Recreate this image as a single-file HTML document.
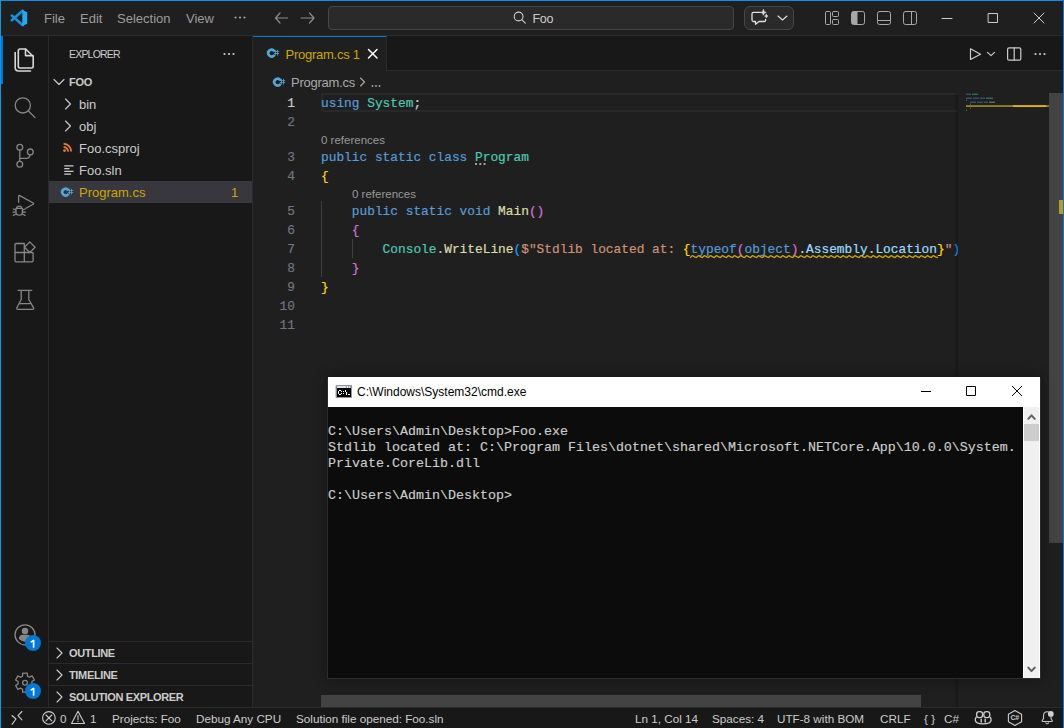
<!DOCTYPE html>
<html><head><meta charset="utf-8">
<style>
*{margin:0;padding:0;box-sizing:border-box}
html,body{width:1064px;height:728px;overflow:hidden;background:#1f1f1f}
body{position:relative;font-family:"Liberation Sans",sans-serif;font-size:13px;color:#cccccc}
.a{position:absolute}
svg.i{position:absolute;overflow:visible;fill:none;stroke-linecap:round;stroke-linejoin:round}
#bt{left:0;top:0;width:1064px;height:1px;background:#0a90e4}
#bl{left:0;top:0;width:1px;height:728px;background:#0a98e6}
#br{left:1063px;top:0;width:1px;height:728px;background:#0878d6}
#title{left:1px;top:1px;width:1062px;height:35px;background:#1f1f1f;border-bottom:1px solid #2b2b2b}
.menu{top:10.6px;color:#9d9d9d;font-size:13px;line-height:16px}
#cc{left:328px;top:6px;width:406px;height:24px;border:1px solid #474747;background:#2a2a2a;border-radius:4px}
#chat{left:744px;top:6px;width:50px;height:24px;border:1px solid #474747;background:#2a2a2a;border-radius:6px}
#act{left:1px;top:36px;width:48px;height:671px;background:#181818;border-right:1px solid #2b2b2b}
#actb{left:1px;top:36px;width:2px;height:48px;background:#0078d4}
#side{left:49px;top:36px;width:204px;height:671px;background:#181818;border-right:1px solid #2b2b2b}
.row{left:49px;width:203px;height:22px;line-height:24px;font-size:13px;color:#cccccc}
.sec{left:49px;width:203px;height:22px;line-height:22px;font-size:11px;font-weight:bold;color:#cccccc;border-top:1px solid #2b2b2b;letter-spacing:-0.35px}
#tabs{left:253px;top:36px;width:810px;height:35px;background:#181818;border-bottom:1px solid #2b2b2b}
#tab{left:253px;top:36px;width:134px;height:35px;background:#1f1f1f;border-top:1px solid #0078d4;border-right:1px solid #2b2b2b}
.code{font-family:"Liberation Mono",monospace;font-size:12.83px;line-height:19px;height:19px;white-space:pre;-webkit-text-stroke:0.2px}
.ln{left:255px;width:40px;text-align:right;color:#6e7681}
.cl{font-size:11.5px;color:#999999;line-height:16px;height:16px}
.kw{color:#569cd6}.ty{color:#4ec9b0}.fn{color:#dcdcaa}.st{color:#ce9178}.b1{color:#ffd700}.b2{color:#da70d6}.b3{color:#179fff}.pr{color:#9cdcfe}
#status{left:1px;top:707px;width:1062px;height:21px;background:#181818;border-top:1px solid #2b2b2b}
.sb{top:711px;font-size:11.7px;line-height:16px;color:#cccccc}
#cmd{left:328px;top:377px;width:712px;height:301px;background:#0c0c0c;box-shadow:0 1px 0 0 #2c2c2c,-1px 1px 0 0 #2c2c2c,1px 1px 0 0 #2c2c2c,0 0 12px 2px rgba(0,0,0,0.3)}
#cmdt{left:328px;top:377px;width:712px;height:30px;background:#ffffff}
.ct{font-family:"Liberation Mono",monospace;font-size:13.33px;line-height:16px;color:#cccccc;white-space:pre;-webkit-text-stroke:0.15px #cccccc}
.badge{width:16px;height:16px;border-radius:8px;background:#0078d4;color:#fff;font-size:10px;font-weight:bold;line-height:16px;text-align:center}
</style></head><body>
<div class="a" id="title"></div>
<div class="a" id="bt"></div><div class="a" id="bl"></div><div class="a" id="br"></div>

<!-- vscode logo -->
<svg class="i" style="left:0;top:0" width="40" height="36" stroke-linecap="butt">
  <path d="M11.8 15.6 L22.6 25" stroke="#1b8fdd" stroke-width="2.7"/>
  <path d="M11.8 20.2 L22.6 10.8" stroke="#1b8fdd" stroke-width="2.7"/>
  <path d="M22.3 10 L27.2 12.3 L27.2 23.7 L22.3 25.9 Z" fill="#25a9f3" stroke="none"/>
</svg>
<div class="a menu" style="left:44px">File</div>
<div class="a menu" style="left:80px">Edit</div>
<div class="a menu" style="left:117px">Selection</div>
<div class="a menu" style="left:186px">View</div>
<svg class="i" style="left:0;top:0" width="260" height="36"><g fill="#9d9d9d" stroke="none"><circle cx="235.5" cy="17.5" r="1.1"/><circle cx="240" cy="17.5" r="1.1"/><circle cx="244.5" cy="17.5" r="1.1"/></g></svg>
<!-- nav arrows -->
<svg class="i" style="left:0;top:0" width="320" height="36" stroke="#8b8b8b" stroke-width="1.2">
  <path d="M280 13 L275.5 18 L280 23 M275.5 18 L287.5 18"/>
  <path d="M309.5 13 L314 18 L309.5 23 M314 18 L301 18"/>
</svg>
<div class="a" id="cc"></div>
<svg class="i" style="left:0;top:0" width="540" height="36" stroke="#cccccc" stroke-width="1.1">
  <circle cx="518.6" cy="16.5" r="4.4"/><path d="M521.8 19.7 L525.3 23.2"/>
</svg>
<div class="a" style="left:532.5px;top:10.8px;font-size:12.5px;line-height:16px;color:#cccccc;letter-spacing:-0.3px">Foo</div>
<div class="a" id="chat"></div>
<svg class="i" style="left:0;top:0" width="800" height="36" stroke="#e0e0e0" stroke-width="1.3">
  <path d="M760.3 12.4 L753.5 12.4 Q752 12.4 752 13.9 L752 20 Q752 21.5 753.5 21.5 L755.5 21.5 L755.5 24.3 L759 21.5 L764.3 21.5 Q765.6 21.5 765.6 20.2 L765.6 19.3"/>
  <path d="M763.4 9.6 Q763.6 12.2 766.2 12.4 Q763.6 12.6 763.4 15.2 Q763.2 12.6 760.6 12.4 Q763.2 12.2 763.4 9.6 Z" fill="#e0e0e0" stroke-width="0.6"/>
  <path d="M766.3 14.3 Q766.4 16 768.1 16.1 Q766.4 16.2 766.3 17.9 Q766.2 16.2 764.5 16.1 Q766.2 16 766.3 14.3 Z" fill="#e0e0e0" stroke-width="0.6"/>
  <path d="M778 16 L782.5 20 L787 16" stroke-width="1.1"/>
</svg>
<!-- layout icons -->
<svg class="i" style="left:0;top:0" width="930" height="36" stroke="#a8a8a8" stroke-width="1">
  <rect x="825.5" y="11.5" width="5" height="13" rx="1"/>
  <rect x="832.5" y="11.5" width="6" height="5" rx="1"/>
  <rect x="832.5" y="19.5" width="6" height="5" rx="1"/>
  <rect x="851.5" y="11.5" width="13" height="13" rx="2"/>
  <path d="M852 12 L857.5 12 L857.5 24 L852 24 Z" fill="#a8a8a8" stroke="none"/>
  <rect x="877.5" y="11.5" width="13" height="13" rx="2"/>
  <path d="M878 20.5 L890 20.5"/>
  <rect x="903.5" y="11.5" width="13" height="13" rx="2"/>
  <path d="M911.5 12 L911.5 24"/>
</svg>
<!-- window controls -->
<svg class="i" style="left:0;top:0" width="1064" height="36" stroke="#cccccc" stroke-width="1">
  <path d="M942 18.5 L952 18.5"/>
  <rect x="988.5" y="13.5" width="9" height="9"/>
  <path d="M1034 13 L1044 23 M1044 13 L1034 23"/>
</svg>

<div class="a" id="act"></div>
<div class="a" id="actb"></div>
<!-- activity icons -->
<svg class="i" style="left:0;top:0" width="48" height="320">
  <g stroke="#d7d7d7" stroke-width="1.6">
    <path d="M25.5 49 L20 49 Q18.3 49 18.3 50.7 L18.3 66.3 Q18.3 68 20 68 L31.5 68 Q33.2 68 33.2 66.3 L33.2 56.5 L25.7 49 Z"/>
    <path d="M25.5 49.2 L25.5 55.6 L33 55.6"/>
    <path d="M15.2 52.5 L15.2 67.5 Q15.2 71 18.7 71 L30.5 71"/>
  </g>
  <g stroke="#868686" stroke-width="1.3">
    <circle cx="22.8" cy="105.4" r="7.6"/><path d="M28.4 111 L35 117.6"/>
    <circle cx="19.8" cy="147.3" r="2.9"/><circle cx="19.8" cy="164.2" r="2.9"/><circle cx="30.3" cy="151.9" r="2.9"/>
    <path d="M19.8 150.2 L19.8 161.3 M19.8 158.3 L26.5 158.3 Q29.5 158.3 30 154.8"/>
    <path d="M18.6 202.3 L18.6 196.3 Q18.6 195 19.8 195.6 L33.2 203 Q34 203.7 33.2 204.3 L26 208.3"/>
    <path d="M16.8 207.3 Q19.2 204.8 21.6 207.3 M16 208.3 L16 212 Q16 215.2 19.2 215.2 Q22.4 215.2 22.4 212 L22.4 208.3 Z M13.3 209 L16 210.2 M25.1 209 L22.4 210.2 M13 212.2 L16 212.2 M25.4 212.2 L22.4 212.2 M13.3 215.3 L16.2 214 M25.1 215.3 L22.2 214"/>
    <path d="M24.3 243.5 L16 243.5 Q15 243.5 15 244.5 L15 260.8 Q15 261.8 16 261.8 L32.1 261.8 Q33.1 261.8 33.1 260.8 L33.1 253.5 Q33.1 252.5 32.1 252.5 L24.3 252.5 Z M15 252.5 L24.3 252.5 M24.3 252.5 L24.3 261.8"/>
    <path d="M29.8 241.9 L35.1 247.2 L29.8 252.5 L24.5 247.2 Z"/>
    <path d="M18.1 290.3 L31.8 290.3 M21.2 290.3 L21.2 299.5 L16.9 307.8 Q16.3 309.4 18 309.4 L32.5 309.4 Q34.2 309.4 33.6 307.8 L28.8 299.5 L28.8 290.3 M20 303.6 L30 303.6"/>
  </g>
</svg>
<svg class="i" style="left:0;top:600px" width="48" height="107">
  <g stroke="#868686" stroke-width="1.3">
    <circle cx="25" cy="34.8" r="10"/>
    <circle cx="25" cy="30.9" r="2.6" fill="#868686"/>
    <path d="M19.5 38.5 Q20 35.3 22.5 35.3 L27.5 35.3 Q30 35.3 30.5 38.5 Q28 41 25 41 Q22 41 19.5 38.5 Z" fill="#868686"/>
    <path d="M22.53 76.15 L22.67 73.18 L27.33 73.18 L27.47 76.15 L29.44 77.29 L32.08 75.92 L34.41 79.96 L31.91 81.56 L31.91 83.84 L34.41 85.44 L32.08 89.48 L29.44 88.11 L27.47 89.25 L27.33 92.22 L22.67 92.22 L22.53 89.25 L20.56 88.11 L17.92 89.48 L15.59 85.44 L18.09 83.84 L18.09 81.56 L15.59 79.96 L17.92 75.92 L20.56 77.29 Z"/>
    <circle cx="25" cy="82.7" r="2.4"/>
  </g>
</svg>
<div class="a badge" style="left:25px;top:635px"></div>
<div class="a badge" style="left:25px;top:683px"></div>

<svg class="i" style="left:0;top:0" width="48" height="707" stroke="#ffffff" stroke-width="1.7" stroke-linecap="butt" stroke-linejoin="miter">
  <path d="M31.2 641.9 L33.6 640.4 L33.6 647"/>
  <path d="M31.2 689.9 L33.6 688.4 L33.6 695"/>
</svg>
<div class="a" id="side"></div>
<!-- sidebar content -->
<div class="a" style="left:69px;top:46px;font-size:10.5px;line-height:16px;color:#cccccc;letter-spacing:-0.8px">EXPLORER</div>
<svg class="i" style="left:0;top:0" width="252" height="60"><g fill="#cccccc" stroke="none"><circle cx="224.5" cy="54" r="1.1"/><circle cx="229" cy="54" r="1.1"/><circle cx="233.5" cy="54" r="1.1"/></g></svg>
<div class="a" style="left:69px;top:73px;font-size:11px;line-height:18px;font-weight:bold;color:#cccccc;letter-spacing:-0.3px">FOO</div>
<div class="a row" style="top:93px"><span class="a" style="left:30px">bin</span></div>
<div class="a row" style="top:115px"><span class="a" style="left:30px">obj</span></div>
<div class="a row" style="top:137px"><span class="a" style="left:30px">Foo.csproj</span></div>
<div class="a row" style="top:159px"><span class="a" style="left:30px">Foo.sln</span></div>
<div class="a row" style="top:181px;background:#37373d;color:#cca700"><span class="a" style="left:30px">Program.cs</span><span class="a" style="left:182px">1</span></div>
<div class="a sec" style="top:641px"><span class="a" style="left:20px">OUTLINE</span></div>
<div class="a sec" style="top:663px"><span class="a" style="left:20px">TIMELINE</span></div>
<div class="a sec" style="top:685px"><span class="a" style="left:20px">SOLUTION EXPLORER</span></div>
<svg class="i" style="left:0;top:0" width="252" height="707" stroke="#cccccc" stroke-width="1.1">
  <path d="M54 79.5 L59 84.5 L64 79.5"/>
  <path d="M65.5 99 L70.5 104 L65.5 109"/>
  <path d="M65.5 121 L70.5 126 L65.5 131"/>
  <path d="M57 648 L62 653 L57 658"/>
  <path d="M57 670 L62 675 L57 680"/>
  <path d="M57 692 L62 697 L57 702"/>
  <g stroke-linecap="butt" stroke-width="1.2">
  <path d="M64.3 165.8 L73.5 165.8 M64.3 168.6 L69.5 168.6 M64.3 171.4 L73.5 171.4 M64.3 174.2 L71 174.2"/>
  </g>
  <g stroke="#e37933" stroke-width="1.9" stroke-linecap="butt">
    <circle cx="64.5" cy="150.6" r="1.4" fill="#e37933" stroke="none"/>
    <path d="M63.6 147 A4.4 4.4 0 0 1 68 151.6"/>
    <path d="M63.6 143.8 A7.7 7.7 0 0 1 71.2 151.6"/>
  </g>
</svg>


<!-- editor tabs -->
<div class="a" id="tabs"></div>
<div class="a" id="tab"></div>
<div class="a" style="left:285.5px;top:46px;font-size:13px;line-height:18px;color:#cca700;letter-spacing:-0.25px">Program.cs 1</div>
<svg class="i" style="left:0;top:0" width="400" height="70" stroke="#ffffff" stroke-width="1.5">
  <path d="M368.5 49.5 L377 58 M377 49.5 L368.5 58"/>
</svg>
<div class="a" style="left:291px;top:75px;font-size:13px;line-height:16px;color:#a9a9a9;letter-spacing:-0.25px">Program.cs</div>
<svg class="i" style="left:0;top:0" width="400" height="92" stroke="#a9a9a9" stroke-width="1.1">
  <path d="M360.5 78 L364.5 82 L360.5 86"/>
  <g fill="#a9a9a9" stroke="none"><circle cx="372.5" cy="86" r="0.9"/><circle cx="376" cy="86" r="0.9"/><circle cx="379.5" cy="86" r="0.9"/></g>
</svg>
<!-- editor actions -->
<svg class="i" style="left:0;top:0" width="1064" height="70" stroke="#cccccc" stroke-width="1.2">
  <path d="M970.5 48.8 L970.5 59.5 L980.5 54.2 Z"/>
  <path d="M987.5 52.3 L991 55.7 L994.5 52.3" stroke-width="1.1"/>
  <rect x="1007.6" y="47.8" width="13.2" height="12.4" rx="1.5"/>
  <path d="M1014.2 48 L1014.2 60"/>
  <g fill="#cccccc" stroke="none"><circle cx="1035.5" cy="54" r="1.1"/><circle cx="1040" cy="54" r="1.1"/><circle cx="1044.5" cy="54" r="1.1"/></g>
</svg>

<!-- C# icons -->
<svg class="i" style="left:0;top:0" width="300" height="200" stroke-linecap="butt" stroke-linejoin="miter">
  <defs><g id="csi">
    <path d="M5.79 2.5 A3.4 3.4 0 1 0 5.79 7.7" stroke="#55a8d6" stroke-width="2.6"/>
    <path d="M7.5 2.2 L7.5 7.2 M9.5 2.2 L9.5 7.2 M6.3 3.5 L10.8 3.5 M6.3 5.5 L10.8 5.5" stroke="#55a8d6" stroke-width="0.9" opacity="0.85"/>
  </g></defs>
  <use href="#csi" x="268" y="48"/>
  <use href="#csi" x="274" y="77"/>
  <use href="#csi" x="62" y="187"/>
</svg>
<!-- line highlight -->
<div class="a" style="left:321px;top:93px;width:637px;height:19px;border:2px solid #282828;border-right:none"></div>
<!-- indent guides -->
<div class="a" style="left:321px;top:201px;width:1px;height:76px;background:#404040"></div>
<div class="a" style="left:352px;top:239px;width:1px;height:19px;background:#404040"></div>

<!-- line numbers -->
<div class="a code ln" style="top:94px;color:#cccccc">1</div>
<div class="a code ln" style="top:113px">2</div>
<div class="a code ln" style="top:148px">3</div>
<div class="a code ln" style="top:167px">4</div>
<div class="a code ln" style="top:202px">5</div>
<div class="a code ln" style="top:221px">6</div>
<div class="a code ln" style="top:240px">7</div>
<div class="a code ln" style="top:259px">8</div>
<div class="a code ln" style="top:278px">9</div>
<div class="a code ln" style="top:297px">10</div>
<div class="a code ln" style="top:316px">11</div>

<!-- code -->
<div class="a code" style="left:321px;top:94px"><span class="kw">using</span> <span class="ty">System</span>;</div>
<div class="a cl" style="left:321px;top:132px">0 references</div>
<div class="a code" style="left:321px;top:148px"><span class="kw">public</span> <span class="kw">static</span> <span class="kw">class</span> <span class="ty">Program</span></div>
<svg class="i" style="left:0;top:0" width="500" height="170"><g fill="#a0a0a0"><rect x="475" y="163" width="2" height="2"/><rect x="479.3" y="163" width="2" height="2"/><rect x="483.5" y="163" width="2" height="2"/></g></svg>
<div class="a code" style="left:321px;top:167px"><span class="b1">{</span></div>
<div class="a cl" style="left:352px;top:186px">0 references</div>
<div class="a code" style="left:321px;top:202px">    <span class="kw">public</span> <span class="kw">static</span> <span class="kw">void</span> <span class="fn">Main</span><span class="b2">()</span></div>
<div class="a code" style="left:321px;top:221px">    <span class="b2">{</span></div>
<div class="a" style="left:321px;top:240px;width:637px;height:19px;overflow:hidden"><div class="a code" style="left:0;top:0"><span class="ty">        Console</span>.<span class="fn">WriteLine</span><span class="b3">(</span><span class="st">$"Stdlib located at: </span><span class="b1">{</span><span class="kw">typeof</span><span class="b2">(</span><span class="kw">object</span><span class="b2">)</span>.<span class="pr">Assembly</span>.<span class="pr">Location</span><span class="b1">}</span><span class="st">"</span><span class="b3">)</span></div></div>
<svg class="i" style="left:0;top:0" width="960" height="260" stroke="#cca700" stroke-width="1.3">
  <path d="M690.5 257.5 Q692.01 254.9 693.51 256.2 T696.52 257.5 Q698.03 254.9 699.54 256.2 T702.55 257.5 Q704.05 254.9 705.56 256.2 T708.57 257.5 Q710.08 254.9 711.59 256.2 T714.60 257.5 Q716.10 254.9 717.61 256.2 T720.62 257.5 Q722.13 254.9 723.63 256.2 T726.65 257.5 Q728.15 254.9 729.66 256.2 T732.67 257.5 Q734.18 254.9 735.68 256.2 T738.70 257.5 Q740.20 254.9 741.71 256.2 T744.72 257.5 Q746.23 254.9 747.73 256.2 T750.74 257.5 Q752.25 254.9 753.76 256.2 T756.77 257.5 Q758.27 254.9 759.78 256.2 T762.79 257.5 Q764.30 254.9 765.80 256.2 T768.82 257.5 Q770.32 254.9 771.83 256.2 T774.84 257.5 Q776.35 254.9 777.85 256.2 T780.87 257.5 Q782.37 254.9 783.88 256.2 T786.89 257.5 Q788.40 254.9 789.90 256.2 T792.91 257.5 Q794.42 254.9 795.93 256.2 T798.94 257.5 Q800.45 254.9 801.95 256.2 T804.96 257.5 Q806.47 254.9 807.98 256.2 T810.99 257.5 Q812.49 254.9 814.00 256.2 T817.01 257.5 Q818.52 254.9 820.02 256.2 T823.04 257.5 Q824.54 254.9 826.05 256.2 T829.06 257.5 Q830.57 254.9 832.07 256.2 T835.09 257.5 Q836.59 254.9 838.10 256.2 T841.11 257.5 Q842.62 254.9 844.12 256.2 T847.13 257.5 Q848.64 254.9 850.15 256.2 T853.16 257.5 Q854.66 254.9 856.17 256.2 T859.18 257.5 Q860.69 254.9 862.20 256.2 T865.21 257.5 Q866.71 254.9 868.22 256.2 T871.23 257.5 Q872.74 254.9 874.24 256.2 T877.26 257.5 Q878.76 254.9 880.27 256.2 T883.28 257.5 Q884.79 254.9 886.29 256.2 T889.30 257.5 Q890.81 254.9 892.32 256.2 T895.33 257.5 Q896.84 254.9 898.34 256.2 T901.35 257.5 Q902.86 254.9 904.37 256.2 T907.38 257.5 Q908.88 254.9 910.39 256.2 T913.40 257.5 Q914.91 254.9 916.41 256.2 T919.43 257.5 Q920.93 254.9 922.44 256.2 T925.45 257.5 Q926.96 254.9 928.46 256.2 T931.48 257.5 Q932.98 254.9 934.49 256.2 T937.50 257.5"/>
</svg>
<div class="a code" style="left:321px;top:259px">    <span class="b2">}</span></div>
<div class="a code" style="left:321px;top:278px"><span class="b1">}</span></div>

<!-- minimap -->
<div class="a" style="left:954px;top:93px;width:4px;height:614px;background:linear-gradient(to right,rgba(0,0,0,0),rgba(0,0,0,0.25))"></div>
<svg class="i" style="left:0;top:0" width="1064" height="120" stroke="none">
  <g opacity="0.75">
  <rect x="966" y="93.6" width="5" height="1.3" fill="#40678f"/><rect x="972" y="93.6" width="6" height="1.3" fill="#3f8a7a"/>
  <rect x="966" y="97.6" width="6" height="1.3" fill="#40678f"/><rect x="973" y="97.6" width="6" height="1.3" fill="#40678f"/><rect x="980" y="97.6" width="5" height="1.3" fill="#40678f"/><rect x="986" y="97.6" width="7" height="1.3" fill="#3f8a7a"/>
  <rect x="966" y="99.6" width="1" height="1.3" fill="#8a7a20"/>
  <rect x="970" y="101.6" width="6" height="1.3" fill="#40678f"/><rect x="977" y="101.6" width="6" height="1.3" fill="#40678f"/><rect x="984" y="101.6" width="4" height="1.3" fill="#40678f"/><rect x="989" y="101.6" width="6" height="1.3" fill="#8a8a6a"/>
  <rect x="970" y="103.6" width="1" height="1.3" fill="#7a5a7a"/>
  <rect x="970" y="107.6" width="1" height="1.3" fill="#7a5a7a"/>
  <rect x="966" y="109.6" width="1" height="1.3" fill="#8a7a20"/>
  </g>
  <rect x="966" y="105.2" width="83" height="1.8" fill="#9a8420"/><rect x="1013" y="105.2" width="33" height="1.8" fill="#e0b400"/>
  <rect x="970" y="105.2" width="43" height="1.8" fill="#7f7a30" opacity="0.6"/>
</svg>
<!-- vertical scrollbar -->
<div class="a" style="left:1049px;top:93px;width:14px;height:450px;background:#434343"></div>
<div class="a" style="left:1059px;top:200px;width:4px;height:14px;background:#b89c2a"></div>
<!-- horizontal scrollbar -->
<div class="a" style="left:321px;top:695px;width:600px;height:12px;background:#434343"></div>

<div class="a" id="status"></div>
<!-- status content -->
<svg class="i" style="left:0;top:700px" width="100" height="28" stroke="#cccccc" stroke-width="1.1">
  <path d="M12 15.5 L16 19 L12 24.3 M21.9 11.5 L18 15.6 L21.9 19.8"/>
  <circle cx="48.9" cy="17.9" r="6.3"/><path d="M46 15 L51.8 20.8 M51.8 15 L46 20.8"/>
  <path d="M78 11.3 L71.5 23.5 L84.5 23.5 Z M78 15.5 L78 19.5 M78 21.1 L78 21.4"/>
</svg>
<div class="a sb" style="left:60px">0</div>
<div class="a sb" style="left:90px">1</div>
<div class="a sb" style="left:112px">Projects: Foo</div>
<div class="a sb" style="left:196px">Debug Any CPU</div>
<div class="a sb" style="left:296px">Solution file opened: Foo.sln</div>
<div class="a sb" style="left:635px">Ln 1, Col 14</div>
<div class="a sb" style="left:712px">Spaces: 4</div>
<div class="a sb" style="left:777px">UTF-8 with BOM</div>
<div class="a sb" style="left:880px">CRLF</div>
<div class="a sb" style="left:924px">{ }</div>
<div class="a sb" style="left:944px">C#</div>
<svg class="i" style="left:0;top:0" width="1064" height="728" stroke="#cccccc" stroke-width="1.3">
  <rect x="976.6" y="711.6" width="6" height="6" rx="2.6"/>
  <rect x="983.8" y="711.6" width="6" height="6" rx="2.6"/>
  <path d="M976 717.5 Q975.2 718.6 975.3 720.3 Q975.8 723.8 983.2 723.8 Q990.6 723.8 991.1 720.3 Q991.2 718.6 990.4 717.5"/>
  <path d="M981.2 719.3 L981.2 722 M985.2 719.3 L985.2 722" stroke-width="1.4"/>
  <path d="M1015 710.6 L1021.6 714.3 L1021.6 721.7 L1015 725.4 L1008.4 721.7 L1008.4 714.3 Z" stroke-width="1.1"/>
  <path d="M1049.3 712.3 Q1048.5 711.8 1047.2 711.8 Q1043.5 711.8 1043.5 716 L1043.5 718.5 L1042.3 720.5 Q1041.7 721.5 1043 721.5 L1051.5 721.5 Q1052.8 721.5 1052.2 720.5 L1051 718.5 L1051 716.8 M1045.8 723 Q1047.2 724.6 1048.6 723" stroke-width="1.1"/>
  <circle cx="1050.8" cy="713.9" r="2.9" fill="#d0d0d0" stroke="none"/>
</svg>
<div class="a" style="left:1010.5px;top:714px;font-size:7px;line-height:8px;font-weight:bold;color:#cccccc;letter-spacing:-0.2px">C#</div>
<!-- cmd -->
<div class="a" id="cmd"></div>
<div class="a" id="cmdt"></div>
<svg class="i" style="left:0;top:0" width="1064" height="410">
  <rect x="336.5" y="385.5" width="15" height="12" fill="#000" stroke="#8e939b" stroke-width="1"/>
  <rect x="337" y="386" width="14" height="2" fill="#dfe4ea" stroke="none"/>
  <g fill="#5a6f9a" stroke="none"><rect x="346" y="386.5" width="1" height="1"/><rect x="348" y="386.5" width="1" height="1"/><rect x="350" y="386.5" width="1" height="1"/></g>
  <g fill="#fff" stroke="none">
    <rect x="339" y="390" width="2" height="1"/><rect x="338" y="391" width="1" height="3"/><rect x="339" y="394" width="2" height="1"/><rect x="341" y="391" width="1" height="1"/><rect x="341" y="393" width="1" height="1"/>
    <rect x="343" y="391" width="1" height="1"/><rect x="343" y="393" width="1" height="1"/>
    <rect x="345" y="390" width="1" height="2"/><rect x="346" y="392" width="1" height="3"/>
    <rect x="348" y="394" width="2" height="1"/>
  </g>
  <g stroke="#000" stroke-width="1" stroke-linecap="butt">
    <path d="M921 391.5 L931 391.5"/>
    <rect x="966.5" y="386.5" width="9" height="9"/>
    <path d="M1012 386 L1022 396 M1022 386 L1012 396"/>
  </g>
</svg>
<div class="a" style="left:357px;top:384px;font-size:12px;line-height:16px;color:#000">C:\Windows\System32\cmd.exe</div>
<div class="a ct" style="left:328px;top:424px">C:\Users\Admin\Desktop&gt;Foo.exe
Stdlib located at: C:\Program Files\dotnet\shared\Microsoft.NETCore.App\10.0.0\System.
Private.CoreLib.dll

C:\Users\Admin\Desktop&gt;</div>
<div class="a" style="left:1023px;top:407px;width:17px;height:271px;background:#f0f0f0;border-left:1px solid #ffffff;border-right:1px solid #ffffff"></div>
<div class="a" style="left:1024px;top:424px;width:15px;height:17px;background:#cdcdcd"></div>
<svg class="i" style="left:0;top:0" width="1064" height="700" stroke="#606060" stroke-width="2" stroke-linecap="butt" stroke-linejoin="miter">
  <path d="M1028.3 418.8 L1031.5 415.3 L1034.7 418.8"/>
  <path d="M1028.3 667.6 L1031.5 671.1 L1034.7 667.6"/>
</svg>
</body></html>
